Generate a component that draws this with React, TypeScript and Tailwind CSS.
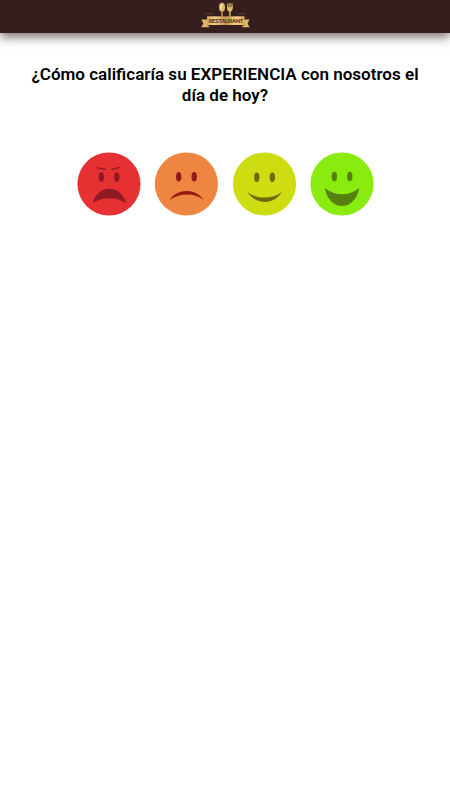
import React, { useState } from 'react';

interface Rating {
  id: string;
  label: string;
  color: string;
  feature: string;
  viewBox: string;
  eyeY: number;
  mouth: string;
  brows?: string;
}

const ratings: Rating[] = [
  {
    id: 'very-bad',
    label: 'Muy mala',
    color: '#e53131',
    feature: '#8f1a24',
    viewBox: '0 0 64 64',
    eyeY: 25,
    mouth: 'M15.8 51.2C20 31.8 44.5 31.8 49.2 51.4C40 44.6 25 44.6 15.8 51.2Z',
    brows: 'M20 15.6L29 17.6M34.5 17.6L43 15.4',
  },
  {
    id: 'bad',
    label: 'Mala',
    color: '#ee8641',
    feature: '#961916',
    viewBox: '0.6 0 64 64',
    eyeY: 24.8,
    mouth: 'M15.2 48C23 36 41.5 36 49.2 47.8C40 40.6 25 40.6 15.2 48Z',
  },
  {
    id: 'good',
    label: 'Buena',
    color: '#cedd11',
    feature: '#6d6b0e',
    viewBox: '-0.5 0 64 64',
    eyeY: 25.2,
    mouth: 'M15.2 40.3C23 53.2 42 53.2 49.2 40.1C39.5 47.4 25 47.4 15.2 40.3Z',
  },
  {
    id: 'very-good',
    label: 'Muy buena',
    color: '#8aeb10',
    feature: '#56800f',
    viewBox: '0 0 64 64',
    eyeY: 24.5,
    mouth: 'M14.8 36C19 60 45 60 49.2 36C39.5 44.4 25 44.4 14.8 36Z',
  },
];

function Face({ rating }: { rating: Rating }) {
  return (
    <svg viewBox={rating.viewBox} className="block size-16 overflow-visible">
      <circle cx="32" cy="32" r="31.6" fill={rating.color} />
      <ellipse cx="24.3" cy={rating.eyeY} rx="2.7" ry="4.7" fill={rating.feature} />
      <ellipse cx="39.8" cy={rating.eyeY} rx="2.7" ry="4.7" fill={rating.feature} />
      {rating.brows && <path d={rating.brows} stroke={rating.feature} strokeWidth="1.3" />}
      <path d={rating.mouth} fill={rating.feature} />
    </svg>
  );
}

function Logo() {
  return (
    <svg viewBox="0 0 50 30" className="block h-[30px] w-[50px] overflow-visible">
      <defs>
        <linearGradient id="gold" x1="0" x2="1" y1="0" y2="0">
          <stop offset="0" stopColor="#d0a658" />
          <stop offset="0.2" stopColor="#ecd087" />
          <stop offset="0.5" stopColor="#c2954a" />
          <stop offset="0.8" stopColor="#f0d68e" />
          <stop offset="1" stopColor="#d0a658" />
        </linearGradient>
      </defs>
      {/* Ribbon tails */}
      <path d="M1.2 19.5H9V27.3H1.2L3.4 23.4Z" fill="#dcb868" />
      <path d="M49.6 19.5H42V27.3H49.6L47.6 23.4Z" fill="#dcb868" />
      <path d="M7 25L9.5 27.3V25ZM44.5 25L42 27.3V25Z" fill="#76511f" />
      <rect x="7" y="16.3" width="37.5" height="8.7" fill="url(#gold)" />
      {/* Spoon and fork */}
      <ellipse cx="22" cy="7.3" rx="3" ry="4.5" fill="#dfb866" />
      <ellipse cx="21.2" cy="6.6" rx="1.2" ry="2.9" fill="#f3dda0" />
      <path d="M22 11V16.3" stroke="#cfa34f" strokeWidth="1.3" />
      <path d="M27.8 3.4V8.5M29.9 3V9M32 3.4V8.5" stroke="#d0a861" strokeWidth="1.4" />
      <path d="M27.1 7.2H32.7Q32.7 11 30.6 11.8V16.3H29.2V11.8Q27.1 11 27.1 7.2Z" fill="#dfb866" />
      <text x="25.9" y="22.9" textAnchor="middle" textLength="34.5" lengthAdjust="spacing" fontFamily="Roboto, sans-serif" fontSize="6" fontWeight="700" fill="#5c3915">
        RESTAURANT
      </text>
      <path d="M5.5 13.8H13.5M37.5 13.8H45.5" stroke="#6d4e35" strokeWidth="1" strokeDasharray="1.5 0.7" />
    </svg>
  );
}

export default function App() {
  const [selected, setSelected] = useState('');

  return (
    <div className="min-h-screen bg-white font-[Roboto,sans-serif]">
      <header className="flex h-[33px] justify-center bg-[#371e1e] shadow-[0_4px_10px_rgba(55,30,30,0.65)]">
        <Logo />
      </header>

      <main className="flex flex-col items-center pt-[31px]">
        <h1 className="w-[400px] text-center text-[17.05px] leading-[20.5px] font-semibold text-black">
          ¿Cómo calificaría su EXPERIENCIA con nosotros el día de hoy?
        </h1>

        <div className="mt-[47px] flex gap-[13.7px] pl-px">
          {ratings.map((rating) => (
            <button
              key={rating.id}
              type="button"
              aria-label={rating.label}
              aria-pressed={selected === rating.id}
              onClick={() => setSelected(rating.id)}
              className="cursor-pointer rounded-full"
            >
              <Face rating={rating} />
            </button>
          ))}
        </div>
      </main>
    </div>
  );
}
